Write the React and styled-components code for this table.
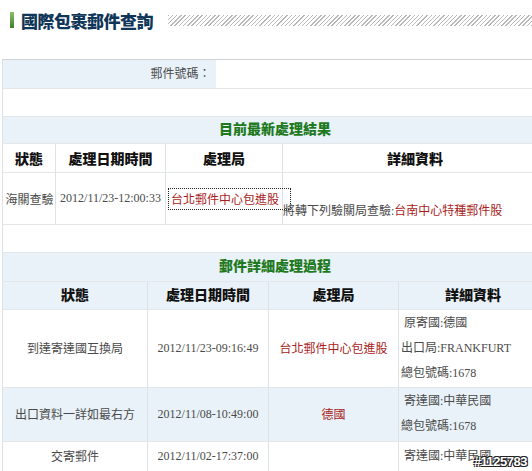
import React from "react";
import styled, { createGlobalStyle } from "styled-components";

const GlobalStyle = createGlobalStyle`
  html, body {
    margin: 0;
    padding: 0;
    background: #fff;
    overflow: hidden;
  }
  body {
    font-family: "Liberation Serif", "Noto Sans CJK TC", serif;
    font-size: 12px;
    color: #444;
  }
`;

const Page = styled.div`
  position: relative;
  width: 532px;
  height: 471px;
  overflow: hidden;
`;

const Header = styled.div`
  display: flex;
  align-items: center;
  height: 40px;
  padding-left: 10px;
  margin-bottom: 19px;
`;

const GreenBar = styled.span`
  width: 4px;
  height: 16px;
  background: linear-gradient(#8cc06a, #3f7f27);
`;

const Title = styled.h1`
  margin: 0 0 0 7px;
  font-family: "Noto Sans CJK TC", sans-serif;
  font-size: 17px;
  font-weight: 900;
  color: #0f3559;
  letter-spacing: -0.5px;
  line-height: 1;
`;

const Hatch = styled.span`
  flex: 1;
  height: 11px;
  margin-left: 15px;
  background: repeating-linear-gradient(
    135deg,
    #b9b9b9 0 1px,
    #ffffff 1px 3px
  );
`;

const Sheet = styled.div`
  margin-left: 2px;
  width: 545px;
  border-top: 1px solid #cfd3d6;
`;

const Table = styled.table`
  width: 100%;
  border-collapse: collapse;
  table-layout: fixed;
`;

const Row = styled.tr`
  height: ${(p) => p.$h}px;
  background: ${(p) => (p.$blue ? "#e9f2f8" : "#fff")};
`;

const Cell = styled.td`
  border-left: ${(p) => (p.$noLeft ? "none" : "1px solid #dde2e5")};
  border-bottom: 1px solid #e3e7ea;
  padding: ${(p) => p.$pad || "0 2px"};
  text-align: ${(p) => p.$align || "center"};
  vertical-align: ${(p) => p.$valign || "middle"};
  background: ${(p) => p.$bg || "transparent"};
  white-space: nowrap;
  overflow: visible;
  font-size: 12px;
  color: #4a4a4a;
`;

const HeadCell = styled.th`
  border-left: 1px solid #dde2e5;
  border-bottom: 1px solid #e3e7ea;
  padding: 0 0 ${(p) => p.$lift || 0}px;
  text-align: center;
  font-family: "Noto Sans CJK TC", sans-serif;
  font-size: 14px;
  font-weight: 900;
  color: #111;
`;

const Caption = styled.td`
  border-left: 1px solid #dde2e5;
  border-bottom: 1px solid #e3e7ea;
  padding: 0 0 3px;
  text-align: center;
  font-family: "Noto Sans CJK TC", sans-serif;
  font-size: 14px;
  font-weight: 900;
  color: #1f7a1f;
`;

const Red = styled.span`
  color: #a81c22;
`;

const FocusLink = styled.a`
  display: inline-block;
  width: 117px;
  padding: 1px 2px;
  color: #a81c22;
  text-decoration: none;
  outline: 1px dotted #222;
  text-align: left;
`;

const Line = styled.div`
  line-height: 25px;
  padding-left: ${(p) => (p.$indent ? "3px" : "0")};
`;

const Stamp = styled.div`
  position: absolute;
  right: 5px;
  bottom: 2px;
  font-family: "Liberation Sans", sans-serif;
  font-size: 13px;
  font-weight: 700;
  color: #fff;
  text-shadow: -1px -1px 0 #222, 1px -1px 0 #222, -1px 1px 0 #222, 1px 1px 0 #222;
  letter-spacing: -0.5px;
`;

const history = [
  {
    status: "到達寄達國互換局",
    time: "2012/11/23-09:16:49",
    office: "台北郵件中心包進股",
    details: ["原寄國:德國", "出口局:FRANKFURT", "總包號碼:1678"],
    h: 78,
  },
  {
    status: "出口資料一詳如最右方",
    time: "2012/11/08-10:49:00",
    office: "德國",
    details: ["寄達國:中華民國", "總包號碼:1678"],
    h: 54,
    blue: true,
  },
  {
    status: "交寄郵件",
    time: "2012/11/02-17:37:00",
    office: "",
    details: ["寄達國:中華民國"],
    h: 30,
  },
];

export default function App() {
  return (
    <Page>
      <GlobalStyle />
      <Header>
        <GreenBar />
        <Title>國際包裹郵件查詢</Title>
        <Hatch />
      </Header>

      <Sheet>
        <Table>
          <colgroup>
            <col style={{ width: 213 }} />
            <col />
          </colgroup>
          <tbody>
            <Row $h={28}>
              <Cell $align="right" $pad="0 5px 2px 0" $bg="#e9f2f8">
                郵件號碼：
              </Cell>
              <Cell $noLeft />
            </Row>
            <Row $h={28}>
              <Cell colSpan={2} />
            </Row>
          </tbody>
        </Table>

        <Table>
          <colgroup>
            <col style={{ width: 53 }} />
            <col style={{ width: 110 }} />
            <col style={{ width: 117 }} />
            <col />
          </colgroup>
          <tbody>
            <Row $h={27} $blue>
              <Caption colSpan={4}>目前最新處理結果</Caption>
            </Row>
            <Row $h={29}>
              <HeadCell $lift={1}>狀態</HeadCell>
              <HeadCell $lift={1}>處理日期時間</HeadCell>
              <HeadCell $lift={1}>處理局</HeadCell>
              <HeadCell $lift={1}>詳細資料</HeadCell>
            </Row>
            <Row $h={52}>
              <Cell $pad="0 0 0 1px">海關查驗</Cell>
              <Cell>2012/11/23-12:00:33</Cell>
              <Cell $align="left" $pad="0 0 0 3px">
                <FocusLink href="#">台北郵件中心包進股</FocusLink>
              </Cell>
              <Cell $align="left" $valign="bottom" $pad="0 0 5px 0">
                將轉下列驗關局查驗:<Red>台南中心特種郵件股</Red>
              </Cell>
            </Row>
            <Row $h={28}>
              <Cell colSpan={4} />
            </Row>
          </tbody>
        </Table>

        <Table>
          <colgroup>
            <col style={{ width: 145 }} />
            <col style={{ width: 121 }} />
            <col style={{ width: 130 }} />
            <col />
          </colgroup>
          <tbody>
            <Row $h={28} $blue>
              <Caption colSpan={4}>郵件詳細處理過程</Caption>
            </Row>
            <Row $h={28} $blue>
              <HeadCell $lift={3}>狀態</HeadCell>
              <HeadCell $lift={3}>處理日期時間</HeadCell>
              <HeadCell $lift={3}>處理局</HeadCell>
              <HeadCell $lift={3}>詳細資料</HeadCell>
            </Row>
            {history.map((item) => (
              <Row key={item.time} $h={item.h} $blue={item.blue}>
                <Cell>{item.status}</Cell>
                <Cell>{item.time}</Cell>
                <Cell>
                  <Red>{item.office}</Red>
                </Cell>
                <Cell $align="left" $pad="0 0 0 2px">
                  {item.details.map((d, i) => (
                    <Line key={d} $indent={i === 0}>
                      {d}
                    </Line>
                  ))}
                </Cell>
              </Row>
            ))}
          </tbody>
        </Table>
      </Sheet>

      <Stamp>#1125783</Stamp>
    </Page>
  );
}
